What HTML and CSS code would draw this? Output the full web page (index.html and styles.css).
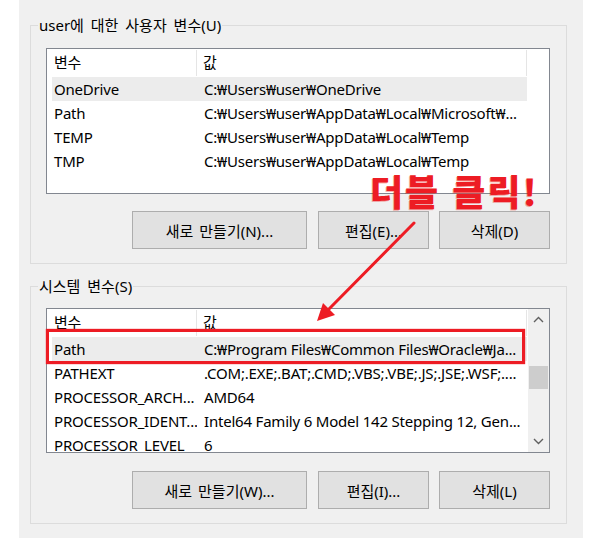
FILE: index.html
```html
<!DOCTYPE html>
<html lang="ko">
<head>
<meta charset="utf-8">
<title>환경 변수</title>
<link rel="stylesheet" href="styles.css">
</head>
<body>
<div class="panel">
  <fieldset class="group group-user">
    <legend>user에 대한 사용자 변수(U)</legend>
    <div class="list list-user">
      <div class="lv-body">
        <div class="lv-head"><span class="h1">변수</span><span class="h2">값</span></div>
        <div class="lv-row sel"><span class="c1">OneDrive</span><span class="c2">C:₩Users₩user₩OneDrive</span></div>
        <div class="lv-row"><span class="c1">Path</span><span class="c2">C:₩Users₩user₩AppData₩Local₩Microsoft₩...</span></div>
        <div class="lv-row"><span class="c1">TEMP</span><span class="c2">C:₩Users₩user₩AppData₩Local₩Temp</span></div>
        <div class="lv-row"><span class="c1">TMP</span><span class="c2">C:₩Users₩user₩AppData₩Local₩Temp</span></div>
      </div>
    </div>
    <div class="buttons">
      <button class="btn btn-wide">새로 만들기(N)...</button>
      <button class="btn">편집(E)...</button>
      <button class="btn">삭제(D)</button>
    </div>
  </fieldset>

  <fieldset class="group group-sys">
    <legend>시스템 변수(S)</legend>
    <div class="list list-sys">
      <div class="lv-body">
        <div class="lv-head"><span class="h1">변수</span><span class="h2">값</span></div>
        <div class="lv-row sel"><span class="c1">Path</span><span class="c2">C:₩Program Files₩Common Files₩Oracle₩Ja...</span></div>
        <div class="lv-row"><span class="c1">PATHEXT</span><span class="c2">.COM;.EXE;.BAT;.CMD;.VBS;.VBE;.JS;.JSE;.WSF;....</span></div>
        <div class="lv-row"><span class="c1">PROCESSOR_ARCH...</span><span class="c2">AMD64</span></div>
        <div class="lv-row"><span class="c1">PROCESSOR_IDENT...</span><span class="c2">Intel64 Family 6 Model 142 Stepping 12, Gen...</span></div>
        <div class="lv-row"><span class="c1">PROCESSOR_LEVEL</span><span class="c2">6</span></div>
      </div>
      <div class="scrollbar">
        <div class="sb-arrow">
          <svg width="11" height="7" viewBox="0 0 11 7"><path d="M1 6 L5.5 1.5 L10 6" fill="none" stroke="#606060" stroke-width="1.4"/></svg>
        </div>
        <div class="sb-track"><div class="sb-thumb"></div></div>
        <div class="sb-arrow">
          <svg width="11" height="7" viewBox="0 0 11 7"><path d="M1 1 L5.5 5.5 L10 1" fill="none" stroke="#606060" stroke-width="1.4"/></svg>
        </div>
      </div>
    </div>
    <div class="buttons">
      <button class="btn btn-wide">새로 만들기(W)...</button>
      <button class="btn">편집(I)...</button>
      <button class="btn">삭제(L)</button>
    </div>
  </fieldset>
</div>

<div class="callout">더블 클릭!</div>
<div class="highlight"></div>
<svg class="arrow" width="605" height="538" viewBox="0 0 605 538">
  <line x1="414" y1="223" x2="329" y2="309" stroke="#ed1c24" stroke-width="3" stroke-linecap="round"/>
  <polygon points="317,321 323,303 335,315" fill="#ed1c24"/>
</svg>
</body>
</html>
```
FILE: styles.css
```css
* { box-sizing: border-box; }

body {
  margin: 0;
  width: 605px;
  height: 538px;
  overflow: hidden;
  position: relative;
  background: #ffffff;
  font-family: "Noto Sans", "Noto Sans CJK KR", sans-serif;
  font-size: 15px;
  color: #000;
}

.panel {
  margin-left: 19px;
  width: 564px;
  height: 538px;
  background: #f0f0f0;
  padding-top: 15px;
  display: flex;
  flex-direction: column;
}

.group {
  margin: 0 16px 0 11px;
  border: 1px solid #dcdcdc;
  padding: 13px 16px 14px 15px;
  min-width: 0;
}

.group-sys {
  margin-top: 12px;
  padding-top: 12px;
}

.group legend {
  margin-left: -8px;
  padding: 0 1px;
  line-height: 20px;
  word-spacing: 3px;
}

.list {
  display: flex;
  background: #fff;
  border: 1px solid #828790;
  overflow: hidden;
}

.list-user { height: 146px; }
.list-sys { height: 145px; }

.lv-body {
  flex: 1;
  min-width: 0;
  overflow: hidden;
}

.lv-head {
  display: flex;
  height: 28px;
  align-items: stretch;
  width: 480px;
  padding: 1px 0 1px;
}

.lv-head span {
  line-height: 25px;
  border-right: 1px solid #e5e5e5;
  letter-spacing: -0.2px;
}

.h1 { width: 150px; padding-left: 7px; }
.h2 { width: 330px; padding-left: 6px; }

.lv-row {
  display: flex;
  height: 24px;
  line-height: 24px;
  margin-left: 5px;
  width: 475px;
  white-space: nowrap;
  letter-spacing: -0.2px;
}

.lv-row.sel { background: #ececec; }

.c1 { width: 145px; padding-left: 2px; overflow: hidden; }
.c2 { flex: 1; padding-left: 7px; overflow: hidden; }

.scrollbar {
  width: 21px;
  background: #f0f0f0;
  display: flex;
  flex-direction: column;
}

.sb-arrow {
  height: 21px;
  display: flex;
  align-items: center;
  justify-content: center;
}

.sb-track {
  flex: 1;
  padding: 36px 1px 0;
}

.sb-thumb {
  height: 23px;
  background: #cdcdcd;
}

.buttons {
  display: flex;
  justify-content: flex-end;
  gap: 10px;
  margin-top: 17px;
}

.group-sys .buttons { margin-top: 18px; }

.btn {
  width: 111px;
  height: 38px;
  background: #e1e1e1;
  border: 1px solid #adadad;
  border-radius: 0;
  font-family: "Noto Sans", "Noto Sans CJK KR", sans-serif;
  font-size: 15px;
  color: #000;
  padding: 0;
  word-spacing: 2px;
}

.btn-wide { width: 175px; margin-right: 1px; }

.callout {
  position: absolute;
  left: 370px;
  top: 172px;
  font-family: "Noto Sans CJK KR", sans-serif;
  font-weight: 900;
  font-size: 36px;
  line-height: 36px;
  letter-spacing: 2px;
  color: #ed1c24;
  text-shadow: -1px 1px 0 rgba(237, 28, 36, 0.35);
  white-space: nowrap;
}

.highlight {
  position: absolute;
  left: 46px;
  top: 329px;
  width: 479px;
  height: 35px;
  border: 3px solid #ed1c24;
  box-shadow: 0 0 1px #ed1c24;
}

.arrow {
  position: absolute;
  left: 0;
  top: 0;
  pointer-events: none;
}
```
